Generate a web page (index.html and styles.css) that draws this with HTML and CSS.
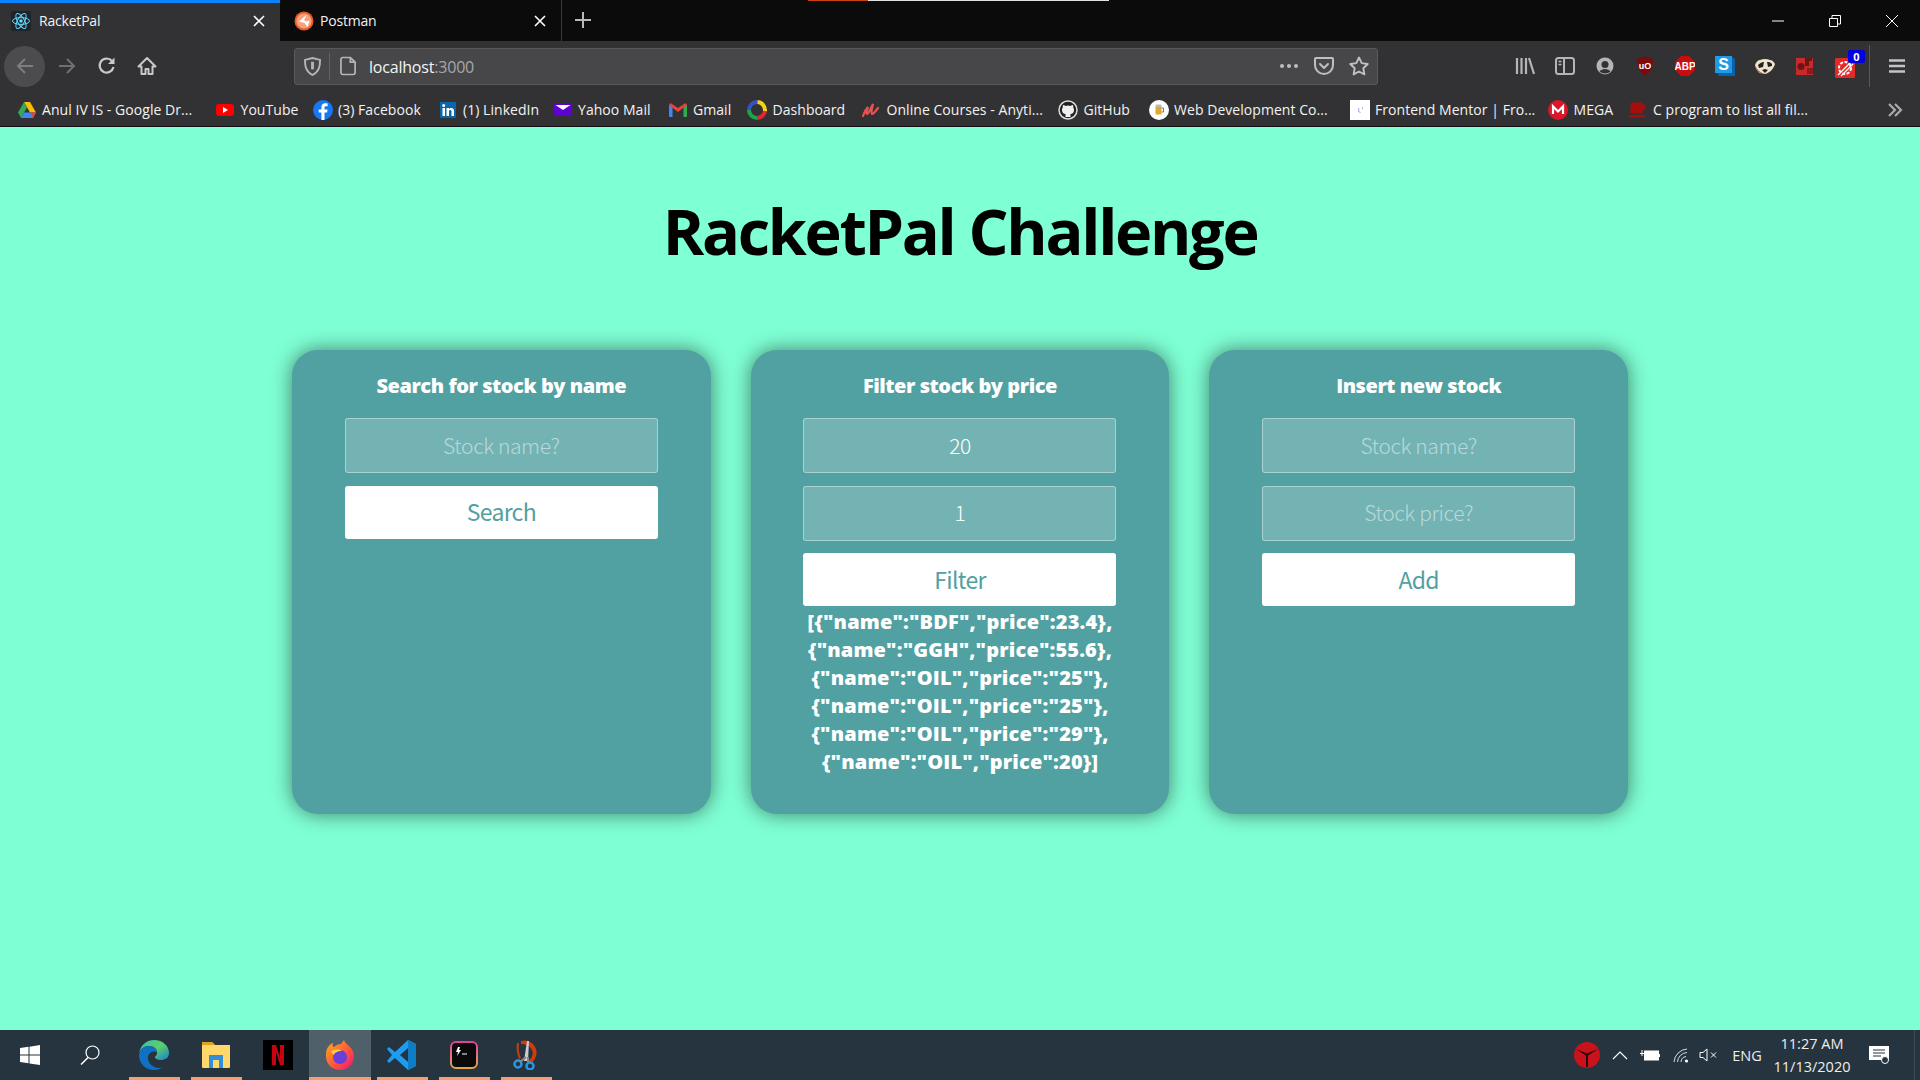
FILE: index.html
```html
<!DOCTYPE html>
<html lang="en">
<head>
<meta charset="utf-8">
<title>RacketPal</title>
<link rel="stylesheet" href="styles.css">
</head>
<body>
<header class="browser">
  <div class="tabbar">
    <div class="tab tab-active">
      <svg class="fav" viewBox="0 0 20 20"><rect width="20" height="20" rx="2" fill="#20232a"/><g fill="none" stroke="#61dafb" stroke-width="1"><ellipse cx="10" cy="10" rx="8.5" ry="3.4"/><ellipse cx="10" cy="10" rx="8.5" ry="3.4" transform="rotate(60 10 10)"/><ellipse cx="10" cy="10" rx="8.5" ry="3.4" transform="rotate(120 10 10)"/></g><circle cx="10" cy="10" r="1.7" fill="#61dafb"/></svg>
      <span class="tab-title">RacketPal</span>
      <svg class="tab-x" viewBox="0 0 12 12"><path d="M1 1l10 10M11 1L1 11" stroke="#fff" stroke-width="1.6"/></svg>
    </div>
    <div class="tab tab-bg">
      <svg class="fav" viewBox="0 0 20 20"><circle cx="10" cy="10" r="9.5" fill="#ef5b25"/><circle cx="10" cy="10" r="7.6" fill="#f7a27f"/><path d="M13 3.500L5 10.500l5.500 1.500 3 4 2-6.500-3 1-2.500-1.500z" fill="#fff"/></svg>
      <span class="tab-title">Postman</span>
      <svg class="tab-x" viewBox="0 0 12 12"><path d="M1 1l10 10M11 1L1 11" stroke="#fff" stroke-width="1.6"/></svg>
    </div>
    <svg class="newtab" viewBox="0 0 18 18"><path d="M9 1v16M1 9h16" stroke="#b9b9ba" stroke-width="2"/></svg>
    <div class="titlefill"><span class="ind-orange"></span><span class="ind-white"></span></div>
    <div class="winctl">
      <svg viewBox="0 0 12 12"><path d="M0 6h12" stroke="#fff"/></svg>
      <svg viewBox="0 0 12 12"><path d="M.5 3.500h8v8h-8zM3 3.500v-3h8.500v8.500h-3" fill="none" stroke="#fff"/></svg>
      <svg viewBox="0 0 12 12"><path d="M0 0l12 12M12 0L0 12" stroke="#fff"/></svg>
    </div>
  </div>
  <div class="navbar">
    <div class="navbtns">
      <span class="back"><svg viewBox="0 0 20 20"><path d="M18 10H3M10 3l-7 7 7 7" fill="none" stroke="#7d7d7f" stroke-width="2"/></svg></span>
      <span class="navbtn"><svg viewBox="0 0 20 20"><path d="M2 10h15M10 3l7 7-7 7" fill="none" stroke="#6f6f71" stroke-width="2"/></svg></span>
      <span class="navbtn"><svg viewBox="0 0 20 20"><path d="M16.500 11a7 7 0 1 1-1.500-6" fill="none" stroke="#c8c8c9" stroke-width="2.200"/><path d="M17.500 1.500v6.500H11z" fill="#c8c8c9"/></svg></span>
      <span class="navbtn"><svg viewBox="0 0 20 20"><path d="M10 2L1.500 10.500h3V18h4v-5h3v5h4v-7.500h3z" fill="none" stroke="#c8c8c9" stroke-width="2" stroke-linejoin="round"/></svg></span>
    </div>
    <div class="urlbar">
      <svg class="shield" viewBox="0 0 18 20"><path d="M9 1l8 2c0 7-1 12-8 16C2 15 1 10 1 3z" fill="none" stroke="#b5b5b6" stroke-width="2"/><path d="M7.500 5h3v8h-3z" fill="#b5b5b6"/></svg>
      <span class="url-sep"></span>
      <svg class="pageicon" viewBox="0 0 18 20"><path d="M3 1h8l5 5v11a2 2 0 0 1-2 2H3a2 2 0 0 1-2-2V3a2 2 0 0 1 2-2zM11 1v5h5" fill="none" stroke="#b5b5b6" stroke-width="1.800"/></svg>
      <span class="url"><span class="url-host">localhost</span><span class="url-port">:3000</span></span>
      <span class="url-end">
        <svg class="dots" viewBox="0 0 20 6"><circle cx="3" cy="3" r="2" fill="#bdbdbe"/><circle cx="10" cy="3" r="2" fill="#bdbdbe"/><circle cx="17" cy="3" r="2" fill="#bdbdbe"/></svg>
        <svg class="pocket" viewBox="0 0 20 20"><path d="M2 2h16a1 1 0 0 1 1 1v6a9 9 0 0 1-18 0V3a1 1 0 0 1 1-1zM6 8l4 4 4-4" fill="none" stroke="#c0c0c1" stroke-width="2" stroke-linecap="round" stroke-linejoin="round"/></svg>
        <svg class="star" viewBox="0 0 20 20"><path d="M10 1.500l2.700 5.600 6 .9-4.400 4.300 1.100 6.100L10 15.500l-5.400 2.900 1.100-6.100L1.300 8l6-.9z" fill="none" stroke="#c0c0c1" stroke-width="1.900" stroke-linejoin="round"/></svg>
      </span>
    </div>
    <div class="tools">
      <svg viewBox="0 0 20 20"><path d="M2 2v16M6.500 2v16M11 2v16M14 2l5 16" stroke="#b5b5b6" stroke-width="2.200" fill="none"/></svg>
      <svg viewBox="0 0 20 20"><rect x="1" y="2" width="18" height="16" rx="2.500" fill="none" stroke="#b5b5b6" stroke-width="2"/><path d="M9 2v16" stroke="#b5b5b6" stroke-width="2"/><path d="M3.500 5.500h3M3.500 8.500h3" stroke="#b5b5b6" stroke-width="1.500"/></svg>
      <svg viewBox="0 0 20 20"><circle cx="10" cy="10" r="8.500" fill="#b5b5b6"/><circle cx="10" cy="8.500" r="3.500" fill="#323234"/><path d="M4.500 15.500c2-3.500 9-3.500 11 0-3 2.500-8 2.500-11 0z" fill="#323234"/></svg>
      <svg viewBox="0 0 20 20"><path d="M10 .5l8 2.500c0 8-1.500 13-8 16.500C3.500 16 2 11 2 3z" fill="#7d0a0a"/><text x="10" y="12.500" class="t-ubo">uO</text></svg>
      <svg viewBox="0 0 20 20"><path d="M6 0h8l6 6v8l-6 6H6l-6-6V6z" fill="#c80d0d"/><text x="10" y="13.500" class="t-abp">ABP</text></svg>
      <svg viewBox="0 0 20 20"><path d="M17 1l3 2v17H4l-2-3z" fill="#0b62a8"/><rect width="17" height="17" fill="#1e9be8"/><text x="8.500" y="14" class="t-s">S</text></svg>
      <svg viewBox="0 0 20 20"><path d="M0 9c1-3 3-5 5-5 3-1.500 7-1.500 10 0 2 0 4 2 5 4-1 4-5 9-10 10C5 17 1 13 0 9z" fill="#eee3cf"/><path d="M3 9c2-2 4-3 6-3l-1 5-4 1zM17 8c-2-2-3-2-5-2l1 5 4-1z" fill="#222"/><path d="M7 14l3-1 3 1-3 3z" fill="#222"/><path d="M0 9l3 6 6 3-5-1-3-4z" fill="#d98a3a"/></svg>
      <svg viewBox="0 0 20 20"><path d="M1 2h17v17H1z" fill="#c62a2a"/><circle cx="6" cy="10.500" r="3.500" fill="#6d1414"/><path d="M10 2h7v3h-3v5h-4z" fill="#6d1414"/><rect x="12" y="12" width="6" height="6" fill="#8d1b1b"/></svg>
      <span class="ext-badged">
        <svg viewBox="0 0 20 20"><rect width="20" height="20" rx="1.500" fill="#e22b27"/><circle cx="10" cy="10" r="6" fill="none" stroke="#fff" stroke-width="2" stroke-dasharray="3 1.500"/><path d="M3 17L17 3M6 18L18 6" stroke="#fff" stroke-width="1.300"/></svg>
        <span class="badge">0</span>
      </span>
    </div>
    <span class="tool-sep"></span>
    <svg class="menu" viewBox="0 0 16 14"><path d="M0 1.500h16M0 7h16M0 12.500h16" stroke="#c4c4c5" stroke-width="2.400"/></svg>
  </div>
  <nav class="bookmarks">
    <a class="bm"><svg viewBox="0 0 18 16"><path d="M6 0h6l6 10.500h-6z" fill="#fbbc04"/><path d="M6 0L0 10.500 3 16l6-10.500z" fill="#34a853"/><path d="M3 16h12l3-5.500H6z" fill="#4285f4"/><path d="M12 10.500h6L15 16z" fill="#ea4335"/></svg><span>Anul IV IS - Google Dr...</span></a>
    <a class="bm"><svg viewBox="0 0 18 16"><rect x="0" y="2" width="18" height="12" rx="3" fill="#f00"/><path d="M7 5l5 3-5 3z" fill="#fff"/></svg><span>YouTube</span></a>
    <a class="bm"><svg class="bm-big" viewBox="0 0 20 20"><circle cx="10" cy="10" r="10" fill="#1778f2"/><path d="M11.500 20v-7.500h2.600l.4-3h-3V7.700c0-.9.300-1.500 1.500-1.500h1.600V3.500c-.8-.1-1.500-.2-2.300-.2-2.400 0-3.900 1.400-3.900 4v2.200H5.700v3h2.700V20z" fill="#fff"/></svg><span>(3) Facebook</span></a>
    <a class="bm"><svg viewBox="0 0 16 16"><rect width="16" height="16" fill="#0a66a8"/><path d="M2.500 6h2.500v8H2.500zM6.500 6H9v1c1-1.700 5-1.700 5 1.800V14h-2.500V9.500c0-2-2.500-2-2.500 0V14H6.500z" fill="#fff"/><circle cx="3.700" cy="3.500" r="1.500" fill="#fff"/></svg><span>(1) LinkedIn</span></a>
    <a class="bm"><svg viewBox="0 0 18 16"><rect y="2" width="18" height="12" fill="#5f01d1"/><path d="M1.500 3h15L9 8z" fill="#fff"/></svg><span>Yahoo Mail</span></a>
    <a class="bm"><svg viewBox="0 0 18 16"><path d="M0 3h3.500v12H1a1 1 0 0 1-1-1z" fill="#4285f4"/><path d="M14.500 3H18v11a1 1 0 0 1-1 1h-2.500z" fill="#34a853"/><path d="M0 3l9 7 9-7-1.500-2L9 6 1.500 1z" fill="#ea4335"/></svg><span>Gmail</span></a>
    <a class="bm"><svg class="bm-big" viewBox="0 0 20 20"><circle cx="10" cy="10" r="8" fill="none" stroke="#e3272d" stroke-width="4" stroke-dasharray="12 38"/><circle cx="10" cy="10" r="8" fill="none" stroke="#1ca34d" stroke-width="4" stroke-dasharray="13 37" stroke-dashoffset="-12"/><circle cx="10" cy="10" r="8" fill="none" stroke="#3a4fc9" stroke-width="4" stroke-dasharray="13 37" stroke-dashoffset="-25"/><circle cx="10" cy="10" r="8" fill="none" stroke="#f3d21e" stroke-width="4" stroke-dasharray="13 37" stroke-dashoffset="-38"/><circle cx="10" cy="10" r="3.500" fill="#333"/></svg><span>Dashboard</span></a>
    <a class="bm"><svg viewBox="0 0 18 16"><path d="M1 14c1-3 3-7 5-9-1 3-2 6-1 7 2 0 4-7 6-10-1 4-2 9-1 10 1 0 3-2 6-6" fill="none" stroke="#ea5252" stroke-width="2.200" stroke-linecap="round"/></svg><span>Online Courses - Anyti...</span></a>
    <a class="bm"><svg class="bm-big" viewBox="0 0 20 20"><circle cx="10" cy="10" r="9" fill="#222" stroke="#ddd" stroke-width="1.500"/><path d="M7.500 17v-3c-2 0-3.500-1.500-3.500-4 0-1 .3-2 .8-2.500-.2-.8-.1-1.700.2-2.500 1 0 1.800.5 2.500 1a7 7 0 0 1 5 0c.7-.5 1.500-1 2.500-1 .3.800.4 1.700.2 2.500.5.500.8 1.500.8 2.500 0 2.500-1.500 4-3.500 4v3z" fill="#eee"/></svg><span>GitHub</span></a>
    <a class="bm"><svg class="bm-big" viewBox="0 0 20 20"><circle cx="10" cy="10" r="10" fill="#fff"/><rect x="6.500" y="6" width="6" height="8.500" rx="1" fill="#e0a92c"/><rect x="6.500" y="4.500" width="6" height="2.500" rx="1" fill="#bbb"/><path d="M12.500 8h2v4h-2" fill="none" stroke="#777" stroke-width="1"/></svg><span>Web Development Co...</span></a>
    <a class="bm"><svg class="bm-big" viewBox="0 0 20 20"><rect width="20" height="20" fill="#fff"/><path d="M9 8c-1 2-.5 4.500 1.500 4.500M13 7.500l-1 .800 1 .800" fill="none" stroke="#8fa6d6" stroke-width="1"/></svg><span>Frontend Mentor | Fro...</span></a>
    <a class="bm"><svg class="bm-big" viewBox="0 0 20 20"><circle cx="10" cy="10" r="10" fill="#d9172a"/><path d="M5 14V6.500l5 5 5-5V14" fill="none" stroke="#fff" stroke-width="2.200"/></svg><span>MEGA</span></a>
    <a class="bm"><svg viewBox="0 0 18 16"><path d="M2 1h11v10H2zM13 3h3v4h-3" fill="#a80d0d" stroke="#a80d0d"/><rect y="13" width="16" height="2.500" fill="#a80d0d"/></svg><span>C program to list all fil...</span></a>
    <svg class="bm-more" viewBox="0 0 16 14"><path d="M2 1l6 6-6 6M8 1l6 6-6 6" fill="none" stroke="#a9a9aa" stroke-width="2.200"/></svg>
  </nav>
</header>

<main class="page">
  <h1 class="title">RacketPal Challenge</h1>
  <section class="cards">
    <article class="card">
      <h2 class="card-title">Search for stock by name</h2>
      <input class="field" placeholder="Stock name?">
      <button class="action">Search</button>
    </article>
    <article class="card">
      <h2 class="card-title">Filter stock by price</h2>
      <input class="field" value="20">
      <input class="field" value="1">
      <button class="action">Filter</button>
      <p class="result">[{"name":"BDF","price":23.4},<br>{"name":"GGH","price":55.6},<br>{"name":"OIL","price":"25"},<br>{"name":"OIL","price":"25"},<br>{"name":"OIL","price":"29"},<br>{"name":"OIL","price":20}]</p>
    </article>
    <article class="card">
      <h2 class="card-title">Insert new stock</h2>
      <input class="field" placeholder="Stock name?">
      <input class="field" placeholder="Stock price?">
      <button class="action">Add</button>
    </article>
  </section>
</main>

<footer class="taskbar">
  <div class="task-left">
    <span class="task-sys"><svg class="i-win" viewBox="0 0 20 20"><path d="M0 3l8.500-1.200V9.500H0zM9.500 1.700L20 0v9.500H9.500zM0 10.500h8.500v7.700L0 17zM9.500 10.500H20V20L9.500 18.400z" fill="#fff"/></svg></span>
    <span class="task-sys"><svg class="i-search" viewBox="0 0 20 20"><circle cx="12.500" cy="7.500" r="6.500" fill="none" stroke="#fff" stroke-width="1.200"/><path d="M8 12.500L1 19.500" stroke="#fff" stroke-width="1.500"/></svg></span>
    <span class="task-gap"></span>
    <span class="task-app open"><svg viewBox="0 0 30 30"><defs><linearGradient id="eg" x1="0" y1="0" x2="1" y2="1"><stop offset="0" stop-color="#36c2a8"/><stop offset=".5" stop-color="#5ad06a"/><stop offset="1" stop-color="#1b7fd1"/></linearGradient></defs><path d="M15 0c9 0 15 6 15 13 0 5-4 7-8 7-3 0-6-1-6-3 0-1 2-1 2-4 0-4-3-7-8-7-5 0-9 3-10 8C1 6 7 0 15 0z" fill="url(#eg)"/><path d="M0 15c1-7 6-9 10-9 5 0 8 3 8 6-5-2-10 2-9 7 1 6 8 11 15 8-3 2-6 3-9 3C7 30 0 24 0 15z" fill="#1070c4"/></svg></span>
    <span class="task-app open"><svg viewBox="0 0 30 30"><path d="M1 3a1 1 0 0 1 1-1h9l3 3h15v22a1 1 0 0 1-1 1H2a1 1 0 0 1-1-1z" fill="#ffd76a"/><path d="M1 3a1 1 0 0 1 1-1h9l3 3H1z" fill="#dba520"/><path d="M8 28V15h14v13h-4v-8h-6v8z" fill="#2f8fd8"/></svg></span>
    <span class="task-app"><svg viewBox="0 0 30 30"><rect width="30" height="30" fill="#000"/><path d="M9 5h4l4 13V5h4v20h-4L13 12v13H9z" fill="#c40510"/></svg></span>
    <span class="task-app active"><svg viewBox="0 0 30 30"><defs><linearGradient id="fx" x1="0" y1="0" x2="1" y2="1"><stop offset="0" stop-color="#ffb11a"/><stop offset=".6" stop-color="#ff4f3e"/><stop offset="1" stop-color="#e31587"/></linearGradient></defs><path d="M2 9C4 5 7 3 8 3c-1 2 0 4 1 4 2-2 5-3 7-3 1-1 2-3 3-4 1 3 3 4 5 6 3 3 5 6 5 10 0 8-6 14-14 14S1 24 1 16c0-3 0-5 1-7z" fill="url(#fx)"/><circle cx="15" cy="17" r="7" fill="#6a3ed8"/><path d="M6 12c3-3 8-3 11-1-4 0-7 1-8 4z" fill="#ffcf3a"/></svg></span>
    <span class="task-app open"><svg viewBox="0 0 30 30"><path d="M21 0l8 4v22l-8 4L8 18l-6 5-2-2 5-6-5-6 2-2 6 5z" fill="#1f9cf0"/><path d="M21 8l-8 7 8 7z" fill="#25333e"/><path d="M21 0l8 4v22l-8 4z" fill="#0f7cc6"/></svg></span>
    <span class="task-app open"><svg viewBox="0 0 30 30"><defs><linearGradient id="tm" x1="0" y1="0" x2="0" y2="1"><stop offset="0" stop-color="#e4409a"/><stop offset="1" stop-color="#e2a455"/></linearGradient></defs><rect x="2" y="2" width="26" height="26" rx="5" fill="#0a0a0a" stroke="url(#tm)" stroke-width="2"/><path d="M9 7l-2 5h2l-1 4 4-6h-2l1-3z" fill="#fff"/><path d="M13 14h5" stroke="#fff"/></svg></span>
    <span class="task-app open"><svg viewBox="0 0 30 30"><path d="M10 1c9-3 18 6 15 15-1 4-4 7-7 8l-1-3c4-3 6-7 4-11-2-4-6-6-11-6z" fill="#d13b0a"/><path d="M8 3c-1 5 0 11 2 15l-2 1C6 14 5 8 6 3z" fill="#d13b0a"/><path d="M16 1l-3 20h4l1-20z" fill="#ccc"/><circle cx="7" cy="24" r="3.500" fill="none" stroke="#2a95e0" stroke-width="2.500"/><circle cx="19" cy="26" r="3.500" fill="none" stroke="#2a95e0" stroke-width="2.500"/><path d="M9 22l6-5M17 22v-5" stroke="#888" stroke-width="2"/></svg></span>
  </div>
  <div class="tray">
    <svg class="i-red" viewBox="0 0 26 26"><circle cx="13" cy="13" r="13" fill="#c9131c"/><path d="M2 7l11 4.500L24 7l-10 6.500V25h-2V13.500z" fill="#2a0606"/></svg>
    <svg class="i-chev" viewBox="0 0 16 10"><path d="M1 9l7-7 7 7" fill="none" stroke="#fff" stroke-width="1.200"/></svg>
    <svg class="i-batt" viewBox="0 0 20 12"><rect x="4.500" y="2" width="14" height="9" fill="#fff" stroke="#fff"/><path d="M19.500 5v3" stroke="#fff"/><path d="M0 4.500h4M2 1v6" stroke="#fff"/></svg>
    <svg class="i-wifi" viewBox="0 0 16 16"><path d="M1 15A14 14 0 0 1 14 2M4.500 15A10 10 0 0 1 14 5.500M8 15a6 6 0 0 1 5-5.500" fill="none" stroke="#ddd" stroke-width="1"/><circle cx="13.500" cy="14" r="1.600" fill="#fff"/></svg>
    <svg class="i-spk" viewBox="0 0 20 14"><path d="M1 4.500h3L8 1v12L4 9.500H1z" fill="none" stroke="#fff"/><path d="M12 4.500l5 5M17 4.500l-5 5" stroke="#fff"/></svg>
    <span class="lang">ENG</span>
    <span class="clock"><span>11:27 AM</span><span>11/13/2020</span></span>
    <svg class="i-note" viewBox="0 0 20 18"><path d="M0 0h20v14H0z" fill="#fff"/><path d="M4 4h12M4 7h12M4 10h8" stroke="#25343e"/><circle cx="16" cy="14" r="3.500" fill="#25343e" stroke="#fff"/></svg>
    <span class="show-desktop"></span>
  </div>
</footer>
</body>
</html>
```
FILE: styles.css
```css
* { box-sizing: border-box; }
html, body { margin: 0; height: 100%; }
body {
  display: flex;
  flex-direction: column;
  height: 1080px;
  overflow: hidden;
  background: #7fffd4;
  font-family: "Open Sans", "Noto Sans", sans-serif;
}
svg { display: block; flex: none; }

/* browser chrome */
.browser { flex: none; background: #323234; color: #f2f2f2; }
.tabbar { display: flex; height: 41px; background: #0b0b0b; align-items: stretch; }
.tab { display: flex; align-items: center; flex: none; font-size: 14px; }
.tab-active { width: 280px; padding: 0 13px 3px 11px; background: #323234; border-top: 3px solid #0a84ff; }
.tab-bg { width: 282px; padding: 0 13px 0 14px; border-right: 1px solid #3a3a3c; }
.fav { width: 20px; height: 20px; margin-right: 8px; }
.tab-bg .fav { margin-right: 6px; }
.tab-title { flex: 1; font-size: 14px; letter-spacing: -.2px; }
.tab-x { width: 12px; height: 12px; margin-right: 2px; }
.newtab { width: 18px; height: 18px; margin: 11px 0 0 12px; }
.titlefill { flex: 1; position: relative; }
.ind-orange, .ind-white { position: absolute; top: 0; height: 1px; }
.ind-orange { left: 216px; width: 60px; background: #c8400e; }
.ind-white { left: 276px; width: 241px; background: #e0e0e0; }
.winctl { display: flex; gap: 45px; padding: 15px 22px 0 0; }
.winctl svg { width: 12px; height: 12px; }

.navbar { display: flex; align-items: center; height: 50px; padding-left: 4px; }
.navbtns { display: flex; align-items: center; width: 290px; flex: none; }
.back { width: 41px; height: 41px; border-radius: 50%; background: #4c4c4e; display: flex; align-items: center; justify-content: center; margin-right: 2px; }
.back svg, .navbtn svg { width: 20px; height: 20px; }
.navbtn { width: 40px; display: flex; justify-content: center; }
.urlbar {
  display: flex; align-items: center; width: 1084px; height: 37px; flex: none;
  background: #474749; border: 1px solid #59595b; border-radius: 3px; padding: 0 8px 0 9px;
}
.shield { width: 17px; height: 19px; }
.url-sep { width: 1px; height: 27px; background: #636365; margin: 0 10px 0 8px; }
.pageicon { width: 17px; height: 20px; margin-right: 12px; }
.url { flex: 1; padding-top: 2px; font-size: 16px; letter-spacing: -.2px; }
.url-host { color: #f4f4f4; }
.url-port { color: #a7a7a8; }
.url-end { display: flex; align-items: center; gap: 15px; }
.dots { width: 20px; height: 6px; }
.pocket { width: 20px; height: 20px; }
.star { width: 20px; height: 20px; }
.tools { display: flex; align-items: center; gap: 20px; margin-left: 137px; }
.tools svg { width: 20px; height: 20px; }
.ext-badged { position: relative; display: block; margin-top: 3px; }
.badge {
  position: absolute; left: 13px; top: -8px; width: 17px; height: 13px;
  background: #0000e0; color: #fff; font-size: 11px; font-weight: 700; line-height: 13px; text-align: center; border-radius: 2px;
}
.tool-sep { width: 1px; height: 42px; background: #58585a; margin-left: 14px; }
.menu { width: 16px; height: 14px; margin-left: 19px; }

.bookmarks {
  display: grid;
  grid-template-columns: 198.5px 97.5px 125px 115px 115px 79.5px 114px 197px 90.5px 201px 198.5px 79.5px 258.5px 16px;
  align-items: center;
  height: 36px;
  padding: 2px 0 0 17.5px;
  font-size: 14px;
  letter-spacing: .05px;
  border-bottom: 1px solid #101012;
  color: #f2f2f2;
}
.bm { display: flex; align-items: center; gap: 6.5px; white-space: nowrap; }
.bm svg { width: 18px; height: 16px; }
.bm svg.bm-big { width: 20px; height: 20px; margin: 0 -1px; }
.bm-more { width: 16px; height: 14px; }

/* page */
.page { flex: 1; display: flex; flex-direction: column; align-items: center; min-height: 0; }
.title {
  margin: 64px 0 0;
  font-size: 63px;
  line-height: 80px;
  font-weight: 700;
  letter-spacing: -2.3px;
  color: #000;
}
.cards { display: grid; grid-template-columns: repeat(3, minmax(0, 1fr)); gap: 40px; width: 1336px; margin-top: 79px; }
.card {
  display: flex; flex-direction: column; align-items: center;
  height: 464px; padding: 22px 0 0;
  border-radius: 26px;
  background: #51a1a2;
  box-shadow: 0 0 20px rgba(0, 0, 0, .5);
  color: #fff;
}
.card-title { margin: 0 0 19px; font-size: 20px; line-height: 27px; font-weight: 800; letter-spacing: -.45px; text-align: center; }
.field {
  width: 313px; height: 55px; margin-bottom: 12.5px; padding: 0 8px 2px;
  background: rgba(255, 255, 255, .2);
  border: 1px solid rgba(255, 255, 255, .4);
  border-radius: 3px;
  color: #fff;
  font: 300 21px "Noto Sans CJK SC", "Noto Sans", sans-serif;
  letter-spacing: -.4px;
  text-align: center;
}
.field::placeholder { color: rgba(255, 255, 255, .5); opacity: 1; }
.action {
  width: 313px; height: 53px; flex: none; padding: 0 0 2px;
  background: #fff;
  border: 0;
  border-radius: 3px;
  color: #53a0a0;
  font: 400 23px "Noto Sans CJK SC", "Noto Sans", sans-serif;
  letter-spacing: -.7px;
}
.result { margin: 2px 0 0; font-size: 20px; line-height: 28px; font-weight: 800; letter-spacing: .15px; text-align: center; white-space: nowrap; }

/* taskbar */
.taskbar { flex: none; display: flex; justify-content: space-between; height: 50px; background: #25343e; color: #fff; }
.task-left { display: flex; }
.task-sys { width: 60px; display: flex; align-items: center; justify-content: center; }
.i-win { width: 20px; height: 20px; }
.i-search { width: 20px; height: 20px; }
.task-gap { width: 3px; }
.task-app { width: 62px; display: flex; align-items: center; justify-content: center; position: relative; }
.task-app svg { width: 30px; height: 30px; }
.task-app.open::after { content: ""; position: absolute; left: 6px; right: 5px; bottom: 0; height: 3px; background: #f1a06e; }
.task-app.active { background: #50606a; }
.task-app.active::after { content: ""; position: absolute; left: 0; right: 0; bottom: 0; height: 3px; background: #f1a06e; }
.tray { display: flex; align-items: center; padding-right: 5px; }
.i-red { width: 26px; height: 26px; margin-right: 12px; }
.i-chev { width: 16px; height: 10px; margin-right: 12px; }
.i-batt { width: 20px; height: 12px; margin-right: 13px; }
.i-wifi { width: 16px; height: 16px; margin-right: 10px; }
.i-spk { width: 20px; height: 14px; margin-right: 13px; }
.lang { width: 30px; font-size: 14.5px; color: #eee; margin-right: 10px; text-align: center; }
.clock { display: flex; flex-direction: column; align-items: center; font-size: 14.5px; line-height: 23px; color: #eee; width: 80px; margin-right: 17px; }
.i-note { width: 20px; height: 18px; }
.show-desktop { width: 1px; height: 50px; margin-left: 25px; background: #3c4a54; }

.t-ubo, .t-abp, .t-s { text-anchor: middle; fill: #fff; font-family: "Liberation Sans", sans-serif; font-weight: 700; }
.t-ubo { font-size: 9px; }
.t-abp { font-size: 10px; }
.t-s { font-size: 16px; }
```
